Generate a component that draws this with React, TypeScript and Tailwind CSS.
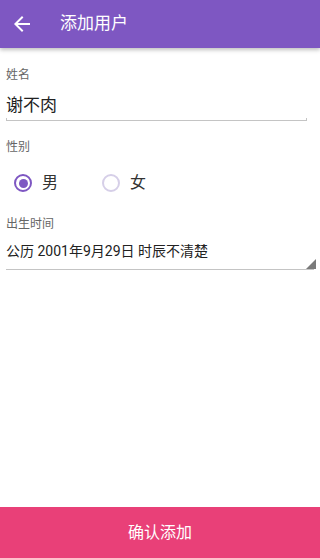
import { useState } from "react";

const cjk = { fontFamily: '"Roboto", "Noto Sans CJK SC", sans-serif' };

const Radio = ({ checked, label, onClick }: { checked: boolean; label: string; onClick: () => void }) => (
  <button onClick={onClick} className="flex items-center gap-[10px]">
    <span
      className={`flex h-[18px] w-[18px] items-center justify-center rounded-full border-2 ${
        checked ? "border-[#7e57c2]" : "border-[#d6cfe8]"
      }`}
    >
      {checked && <span className="h-[9px] w-[9px] rounded-full bg-[#7e57c2]" />}
    </span>
    <span className="text-[16px] leading-[24px] text-[#333333]">{label}</span>
  </button>
);

export default function App() {
  const [gender, setGender] = useState<"m" | "f">("m");

  return (
    <div className="flex h-[558px] w-[320px] flex-col bg-white" style={cjk}>
      {/* Toolbar */}
      <div className="relative z-10 flex h-12 items-center bg-[#7e57c2] shadow-[0_2px_4px_rgba(0,0,0,0.25)]">
        <svg viewBox="0 0 24 24" className="ml-[10px] h-6 w-6 fill-white">
          <path d="M20 11H7.83l5.59-5.59L12 4l-8 8 8 8 1.41-1.41L7.83 13H20v-2z" />
        </svg>
        <span className="ml-[26px] text-[17px] text-white">添加用户</span>
      </div>

      <div className="px-[6px]">
        {/* Name */}
        <div className="mt-[19px] text-[12px] leading-[16px] text-[#666666]">姓名</div>
        <div className="mt-[10px] text-[17px] leading-[24px] text-[#222222]">谢不肉</div>
        <div className="mt-[1px] mr-[7px] h-[3px] border-x border-b border-[#c4c4c4]" />

        {/* Gender */}
        <div className="mt-[18px] text-[12px] leading-[16px] text-[#666666]">性别</div>
        <div className="mt-[14px] flex h-[28px] items-center gap-[44px] pl-[8px]">
          <Radio checked={gender === "m"} label="男" onClick={() => setGender("m")} />
          <Radio checked={gender === "f"} label="女" onClick={() => setGender("f")} />
        </div>

        {/* Birth */}
        <div className="mt-[19px] text-[12px] leading-[16px] text-[#666666]">出生时间</div>
        <div className="relative mt-[9px]">
          <div className="text-[14px] leading-[20px] text-[#222222]">公历 2001年9月29日 时辰不清楚</div>
          <div className="mt-[8px] h-px bg-[#c4c4c4]" />
          <svg viewBox="0 0 10 10" className="absolute bottom-[1px] right-[-2px] h-[10px] w-[10px] fill-[#7a7a7a]">
            <path d="M10 0V10H0z" />
          </svg>
        </div>
      </div>

      <button className="mt-auto flex h-[51px] items-center justify-center bg-[#e94078] text-[16px] text-white">
        确认添加
      </button>
    </div>
  );
}
